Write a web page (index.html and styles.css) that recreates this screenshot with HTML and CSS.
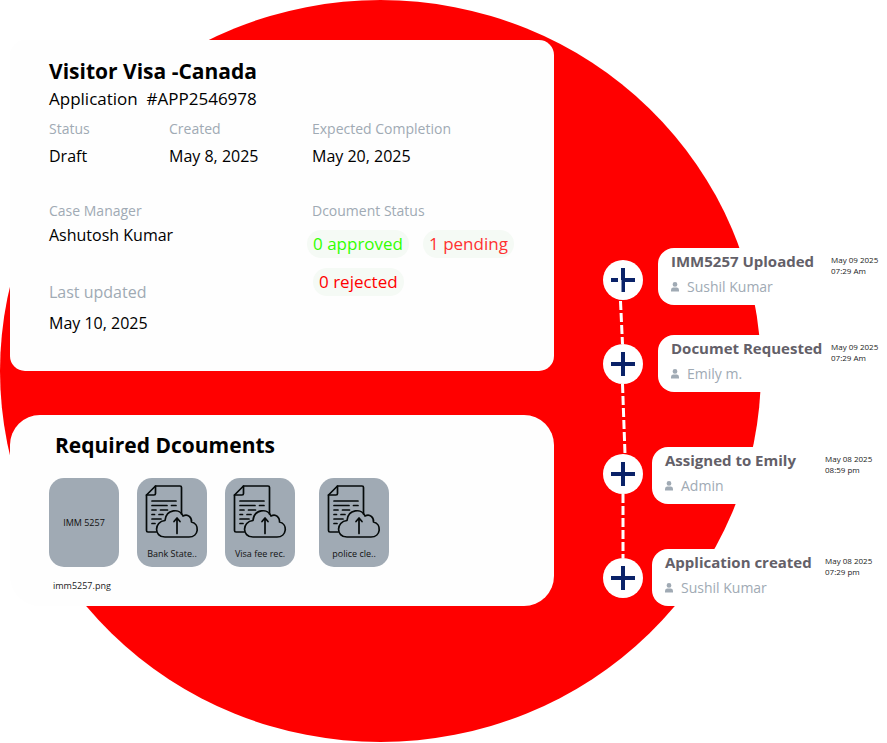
FILE: index.html
```html
<!DOCTYPE html>
<html lang="en">
<head>
<meta charset="utf-8">
<title>Visitor Visa - Canada</title>
<link rel="stylesheet" href="styles.css">
</head>
<body>
<svg class="sprite" aria-hidden="true">
  <symbol id="upload" viewBox="0 0 54 54">
    <g fill="none" stroke="#050a0a" stroke-width="1.7" stroke-linejoin="round" stroke-linecap="round">
      <path d="M11 47H3Q1.500 47 1.500 45.500V10L10.500 1H35Q36.500 1 36.500 2.500V29"/>
      <path d="M10.500 1V8.500Q10.500 10 9 10H1.500"/>
      <path d="M7 16H31M7 20.500H22M26.500 20.500H31M7 25H11M15.500 25H22.500M7 29.500H9.500M14 29.500H18M7 34H16M7 38.500H10"/>
      <path d="M20 52C8.500 52 9 36.500 20 35.500C21 24 35 23 38 31C43 28 47 33 46.500 37C55 39 54 52 44 52Z"/>
      <path d="M32 48.500V33.500M29 36.500L32 33L35 36.500"/>
    </g>
  </symbol>
  <symbol id="person" viewBox="0 0 8 10">
    <path fill="#a0aab4" d="M4 0a2.400 2.400 0 0 1 0 4.800a2.400 2.400 0 0 1 0-4.800M0 9.500V8Q0 5.500 2 5.500H6Q8 5.500 8 8V9.500Z"/>
  </symbol>
  <symbol id="plus" viewBox="0 0 24 24">
    <path fill="none" stroke="#0a2268" stroke-width="4" d="M12 0V24M0 12H24"/>
  </symbol>
</svg>
<main class="page">
  <div class="disc"></div>
  <div class="panels">
    <section class="panel summary">
      <h1>Visitor Visa -Canada</h1>
      <p class="number">Application&nbsp; #APP2546978</p>
      <dl class="facts">
        <div><dt>Status</dt><dd>Draft</dd></div>
        <div><dt>Created</dt><dd>May 8, 2025</dd></div>
        <div><dt>Expected Completion</dt><dd>May 20, 2025</dd></div>
        <div class="people">
          <div class="manager"><dt>Case Manager</dt><dd>Ashutosh Kumar</dd></div>
          <div class="updated"><dt>Last updated</dt><dd>May 10, 2025</dd></div>
        </div>
        <div>
          <dt>Dcoument Status</dt>
          <dd class="pills">
            <span class="pill approved">0 approved</span>
            <span class="pill pending">1 pending</span>
            <span class="pill rejected">0 rejected</span>
          </dd>
        </div>
      </dl>
    </section>
    <section class="panel documents">
      <h2>Required Dcouments</h2>
      <ul class="tiles">
        <li><div class="tile plain">IMM 5257</div><p class="file">imm5257.png</p></li>
        <li><button class="tile" type="button"><svg><use href="#upload"/></svg>Bank State..</button></li>
        <li><button class="tile" type="button"><svg><use href="#upload"/></svg>Visa fee rec.</button></li>
        <li class="extra"><button class="tile" type="button"><svg><use href="#upload"/></svg>police cle..</button></li>
      </ul>
    </section>
  </div>
  <ol class="timeline">
    <li class="event recent first">
      <div class="marker">
        <svg class="plus" viewBox="0 0 24 24"><path fill="none" stroke="#0a2268" stroke-width="4" d="M12 0V24M0 12H7M14 12H24"/><path fill="#fff" d="M9 12H10.500V26H9Z"/></svg>
        <svg class="link" viewBox="0 0 12 44" height="44"><path d="M3.500 1L5.500 44"/></svg>
      </div>
      <article class="entry">
        <div><h3>IMM5257 Uploaded</h3><p class="who"><svg><use href="#person"/></svg>Sushil Kumar</p></div>
        <time>May 09 2025<br>07:29 Am</time>
      </article>
    </li>
    <li class="event recent second">
      <div class="marker">
        <svg class="plus"><use href="#plus"/></svg>
        <svg class="link" viewBox="0 0 12 70" height="70"><path d="M5.500 0L8 70"/></svg>
      </div>
      <article class="entry">
        <div><h3>Documet Requested</h3><p class="who"><svg><use href="#person"/></svg>Emily m.</p></div>
        <time>May 09 2025<br>07:29 Am</time>
      </article>
    </li>
    <li class="event third">
      <div class="marker">
        <svg class="plus"><use href="#plus"/></svg>
        <svg class="link" viewBox="0 0 12 64" height="64"><path d="M6 0V64"/></svg>
      </div>
      <article class="entry">
        <div><h3>Assigned to Emily</h3><p class="who"><svg><use href="#person"/></svg>Admin</p></div>
        <time>May 08 2025<br>08:59 pm</time>
      </article>
    </li>
    <li class="event">
      <div class="marker"><svg class="plus"><use href="#plus"/></svg></div>
      <article class="entry">
        <div><h3>Application created</h3><p class="who"><svg><use href="#person"/></svg>Sushil Kumar</p></div>
        <time>May 08 2025<br>07:29 pm</time>
      </article>
    </li>
  </ol>
</main>
</body>
</html>
```
FILE: styles.css
```css
* { box-sizing: border-box; margin: 0; padding: 0; }
body { background: #fff; color: #000; font-family: "Open Sans", "Noto Sans", sans-serif; }
ul, ol { list-style: none; }
svg { display: block; }
.sprite { position: absolute; width: 0; height: 0; }

.page {
  position: relative;
  display: grid;
  grid-template-columns: minmax(0, 1fr) 284px;
  gap: 49px;
  padding: 40px 0 136px 10px;
}
.disc {
  position: absolute;
  z-index: -1;
  inset: 0 126px 0 0;
  border-radius: 50%;
  background: #f00;
}

.panels { display: grid; align-content: start; gap: 44px; }
.panel { background: #fefefe; }
.summary { padding: 17px 16px 36px 39px; border-radius: 15px; }
h1, h2 { font-size: 21px; line-height: 28px; font-weight: 700; }
.number { margin-top: 2px; font-size: 17px; line-height: 24px; }

.facts { display: grid; grid-template-columns: 120px 143px minmax(0, 1fr); row-gap: 33px; margin-top: 8px; }
dt { color: #a0aab4; font-size: 14px; line-height: 20px; }
dd { margin-top: 5px; font-size: 16px; line-height: 24px; }
.people { grid-column: span 2; display: grid; align-content: start; gap: 33px; }
.manager dd { margin-top: 2px; }
.updated dt { font-size: 16px; line-height: 24px; }
.updated dd { margin-top: 7px; }
.pills { display: flex; flex-wrap: wrap; gap: 10px 14px; margin: 9px 0 0 -5px; }
.pill { padding: 0 6px; border-radius: 14px; background: #f5faf5; font-size: 17px; line-height: 28px; }
.approved { color: #3f0; }
.pending { color: #ff3131; }
.rejected { margin-left: 6px; color: #f00; }

.documents { padding: 16px 39px 13px; border-radius: 30px; }
h2 { margin-left: 6px; }
.tiles { display: flex; gap: 18px; margin-top: 19px; }
.extra { margin-left: 6px; }
.tile {
  display: flex;
  flex-direction: column;
  align-items: center;
  width: 70px;
  height: 89px;
  padding-top: 7px;
  border: 0;
  border-radius: 15px;
  background: #a0aab4;
  color: #111;
  font: 9px/14px "Open Sans", "Noto Sans", sans-serif;
}
.tile svg { width: 54px; height: 54px; margin-bottom: 8px; }
.plain { justify-content: center; padding: 0; }
.file { margin: 12px 0 0 4px; color: #222; font-size: 9px; line-height: 14px; }

.timeline { padding-top: 208px; }
.event { display: grid; grid-template-columns: 40px minmax(0, 1fr); gap: 9px; align-items: start; }
.recent { gap: 15px; }
.first { margin-bottom: 30px; }
.second { margin-bottom: 55px; }
.third { margin-bottom: 45px; }
.marker {
  position: relative;
  display: grid;
  place-items: center;
  height: 40px;
  margin-top: 9px;
  border-radius: 50%;
  background: #fff;
}
.first .marker { margin-top: 12px; }
.third .marker { margin-top: 7px; }
.plus { width: 24px; height: 24px; }
.link { position: absolute; top: 100%; left: 14px; width: 12px; }
.link path { fill: none; stroke: #fff; stroke-width: 3; stroke-dasharray: 9 3; }
.entry {
  display: flex;
  justify-content: space-between;
  height: 57px;
  padding: 2px 6px 0 13px;
  border-radius: 16px 0 0 16px;
  background: #fff;
  white-space: nowrap;
}
.event:not(.recent) .entry { padding-right: 12px; }
h3 { color: #636068; font-size: 15px; line-height: 22px; font-weight: 700; }
.who { display: flex; align-items: center; gap: 8px; margin-top: 5px; color: #a0aab4; font-size: 14px; line-height: 20px; }
.who svg { width: 8px; height: 10px; }
time { width: 50px; padding-top: 4px; color: #222; font-size: 8px; line-height: 11px; }
```
